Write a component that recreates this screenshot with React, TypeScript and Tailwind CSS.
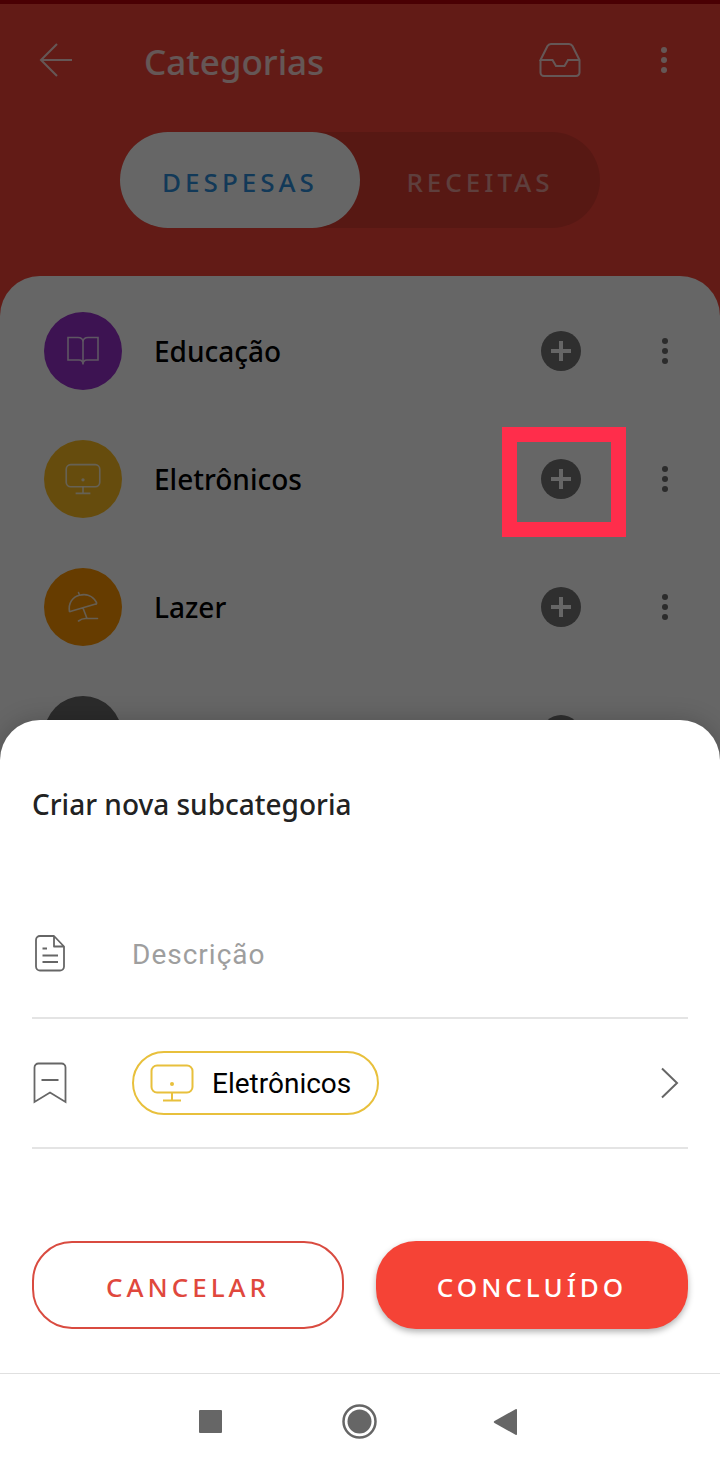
import React, { useState } from 'react';
import { clsx } from 'clsx';

type Tab = 'despesas' | 'receitas';

interface IconProps {
  className?: string;
}

interface Category {
  name: string;
  color: string;
  icon?: React.ReactNode;
  highlighted?: boolean;
}

function BackIcon() {
  return (
    <svg className="h-9 w-9" viewBox="0 0 36 36" fill="none" stroke="currentColor" strokeWidth="2">
      <path d="M34 18H3M19 2L3 18l16 16" />
    </svg>
  );
}

function InboxIcon() {
  return (
    <svg className="h-9 w-[42px]" viewBox="0 0 42 36" fill="none" stroke="currentColor" strokeWidth="2">
      <path d="M1.500 18v12.500a3.500 3.500 0 0 0 3.500 3.500h32a3.500 3.500 0 0 0 3.500-3.500V18L33.500 4A4 4 0 0 0 30 2H12A4 4 0 0 0 8.500 4L1.500 18h12l3.500 6h8.500l3.500-6H40.500" />
    </svg>
  );
}

function DotsIcon() {
  return (
    <svg className="h-8 w-8" viewBox="0 0 32 32" fill="currentColor">
      <circle cx="16" cy="6" r="3" />
      <circle cx="16" cy="16" r="3" />
      <circle cx="16" cy="26" r="3" />
    </svg>
  );
}

function BookIcon() {
  return (
    <svg className="h-9 w-9" viewBox="0 0 36 36" fill="none" stroke="currentColor" strokeWidth="1.600">
      <path d="M18 9c0-3-2-4.500-5-4.500H3V27h11c2.500 0 4 1 4 4.500V9zM18 9c0-3 2-4.500 5-4.500h10V27H22c-2.500 0-4 1-4 4.500" />
    </svg>
  );
}

function MonitorIcon({ className }: IconProps) {
  return (
    <svg className={className} viewBox="0 0 44 38" fill="none" stroke="currentColor" strokeWidth="2">
      <rect x="1.500" y="1.500" width="41" height="27" rx="5.500" />
      <path d="M22 28.500V36M13 36.500h18" />
      <circle cx="22" cy="20" r="2" fill="currentColor" stroke="none" />
    </svg>
  );
}

function UmbrellaIcon() {
  return (
    <svg className="h-9 w-9" viewBox="0 0 36 36" fill="none" stroke="currentColor" strokeWidth="1.600" strokeLinecap="round" strokeLinejoin="round">
      <path d="M4.500 22.500C3 14 8 7.500 14.500 6.200 21.500 4.500 28 7 31.500 13.500c.3.800 0 1.400-.8 1.600L6 22.300c-.7.300-1.300.400-1.500.200zM14.500 6.200L13.500 3.500M18 19l4 10.500M13.500 32c2-1.500 4-2.500 7-2.500H32.500" />
    </svg>
  );
}

function DocumentIcon() {
  return (
    <svg className="h-10 w-9" viewBox="0 0 36 40" fill="none" stroke="currentColor" strokeWidth="1.800" strokeLinejoin="round">
      <path d="M22 3H8a4 4 0 0 0-4 4v26.500a4 4 0 0 0 4 4h20a4 4 0 0 0 4-4V13.500L22 3v10.500h10M10.500 15.500h4.500M10.500 22.500h15.500M10.500 29h15.500" />
    </svg>
  );
}

function BookmarkIcon() {
  return (
    <svg className="h-11 w-9" viewBox="0 0 36 44" fill="none" stroke="currentColor" strokeWidth="1.800">
      <path d="M2.500 41V6.500a4 4 0 0 1 4-4h23a4 4 0 0 1 4 4V41L18 31.500 2.500 41zM9.500 19h17" />
    </svg>
  );
}

const categories: Category[] = [
  {
    name: 'Educação',
    color: 'bg-[#9830cc]',
    icon: <BookIcon />,
  },
  {
    name: 'Eletrônicos',
    color: 'bg-[#ffbf22]',
    icon: <MonitorIcon className="h-8 w-9" />,
    highlighted: true,
  },
  {
    name: 'Lazer',
    color: 'bg-[#ff9600]',
    icon: <UmbrellaIcon />,
  },
  { name: '', color: 'bg-[#6b6b6b]' },
];

function CategoryRow({ name, color, icon, highlighted }: Category) {
  return (
    <li className="flex h-32 items-center pr-[39px] pl-11">
      <span className={clsx('flex size-[78px] items-center justify-center rounded-full text-white/80', color)}>
        {icon}
      </span>
      <span className="ml-8 flex-1 text-[28px] leading-10 font-medium text-black">{name}</span>
      <div className="relative mr-[68px] size-10">
        <button
          type="button"
          aria-label="Adicionar subcategoria"
          className="flex size-10 items-center justify-center rounded-full bg-[#757575] text-white"
        >
          <svg className="size-5" viewBox="0 0 20 20" fill="currentColor">
            <path d="M8 0h4v8h8v4h-8v8H8v-8H0V8h8z" />
          </svg>
        </button>
        {highlighted && (
          <div className="pointer-events-none absolute -top-8 -left-[39px] z-10 h-[110px] w-[124px] border-[15px] border-[#ff2d4b]" />
        )}
      </div>
      <button type="button" aria-label="Mais opções" className="text-[#6b6b6b]">
        <DotsIcon />
      </button>
    </li>
  );
}

export default function App() {
  const [tab, setTab] = useState<Tab>('despesas');
  const [description, setDescription] = useState('');

  const tabClass = (value: Tab) =>
    clsx(
      'flex-1 rounded-[48px] pt-1 text-[26px] font-medium tracking-[4px]',
      tab === value ? 'bg-white text-[#2f8fdb]' : 'text-white/50'
    );

  return (
    <div className="relative flex min-h-screen flex-col overflow-hidden font-['Noto_Sans',sans-serif]">
      {/* Categories screen */}
      <div className="absolute inset-0 overflow-hidden bg-[#f44539]">
        <div className="h-1 bg-[#b80008]" />
        <header className="flex h-28 items-center pr-10 pl-[38px] text-white/80">
          <button type="button" aria-label="Voltar">
            <BackIcon />
          </button>
          <h1 className="ml-[70px] flex-1 pt-1 text-[35px] font-medium">Categorias</h1>
          <button type="button" aria-label="Arquivadas">
            <InboxIcon />
          </button>
          <button type="button" aria-label="Mais opções" className="ml-[67px]">
            <DotsIcon />
          </button>
        </header>
        <div className="mx-[120px] mt-4 flex h-24 rounded-[48px] bg-[#da3c31]">
          <button type="button" className={tabClass('despesas')} onClick={() => setTab('despesas')}>
            DESPESAS
          </button>
          <button type="button" className={tabClass('receitas')} onClick={() => setTab('receitas')}>
            RECEITAS
          </button>
        </div>
        <ul className="mt-12 h-full rounded-t-[40px] bg-white pt-[11px]">
          {categories.map((category, index) => (
            <CategoryRow key={index} {...category} />
          ))}
        </ul>
      </div>

      <div className="absolute inset-0 bg-black/60" />

      {/* New subcategory sheet */}
      <form
        className="relative z-20 mt-auto rounded-t-[40px] bg-white px-8 pt-16 pb-11 shadow-[0_0_24px_rgba(0,0,0,0.2)]"
        onSubmit={(e) => e.preventDefault()}
      >
        <h2 className="text-[28px] leading-10 font-medium text-[#222222]">Criar nova subcategoria</h2>

        <div className="mt-[65px] flex h-[130px] items-center border-b-2 border-[#e4e4e4] text-[#666666]">
          <label htmlFor="description" aria-label="Descrição">
            <DocumentIcon />
          </label>
          <input
            id="description"
            type="text"
            value={description}
            onChange={(e) => setDescription(e.target.value)}
            placeholder="Descrição"
            className="ml-16 min-w-0 flex-1 pt-1 font-[Roboto,sans-serif] text-[28px] tracking-[1px] text-black outline-none placeholder:text-[#9e9e9e]"
          />
        </div>

        <button
          type="button"
          className="flex h-[130px] w-full items-center border-b-2 border-[#e4e4e4] text-[#666666]"
        >
          <BookmarkIcon />
          <span className="ml-16 flex h-16 items-center rounded-full border-2 border-[#e8c03c] pr-[26px] pl-4 text-[#e8c03c]">
            <MonitorIcon className="h-[38px] w-11" />
            <span className="ml-[18px] pt-[2px] font-[Roboto,sans-serif] text-[28px] text-black">Eletrônicos</span>
          </span>
          <svg className="ml-auto h-9 w-9" viewBox="0 0 36 36" fill="none" stroke="currentColor" strokeWidth="2">
            <path d="M10 3.500L25 18 10 32.500" />
          </svg>
        </button>

        <div className="mt-[92px] grid grid-cols-2 gap-8 text-[26px] font-medium tracking-[4px]">
          <button type="button" className="h-[88px] rounded-[40px] border-2 border-[#d94b40] pt-1 text-[#e0483d]">
            CANCELAR
          </button>
          <button
            type="submit"
            className="h-[88px] rounded-[40px] bg-[#f54336] pt-1 text-white shadow-[0_3px_6px_rgba(0,0,0,0.3)]"
          >
            CONCLUÍDO
          </button>
        </div>
      </form>

      {/* Android navigation bar */}
      <nav className="relative z-20 flex h-24 items-center justify-center border-t border-[#e0e0e0] bg-white text-[#666666]">
        <button type="button" aria-label="Recentes" className="flex w-[149px] justify-center">
          <svg className="size-9" viewBox="0 0 36 36" fill="currentColor">
            <rect x="6" y="6" width="23" height="23" rx="1" />
          </svg>
        </button>
        <button type="button" aria-label="Início" className="flex w-[149px] justify-center">
          <svg className="size-9" viewBox="0 0 36 36">
            <circle cx="17.500" cy="17.500" r="16" fill="none" stroke="currentColor" strokeWidth="2.500" />
            <circle cx="17.500" cy="17.500" r="12" fill="currentColor" />
          </svg>
        </button>
        <button type="button" aria-label="Voltar" className="flex w-[149px] justify-center">
          <svg className="size-9" viewBox="0 0 36 36" fill="currentColor">
            <path d="M3.500 17L24.500 5.200Q26 4.500 26 6v24q0 1.500-1.500.800L3.500 19Q2 18 3.500 17z" />
          </svg>
        </button>
      </nav>
    </div>
  );
}
